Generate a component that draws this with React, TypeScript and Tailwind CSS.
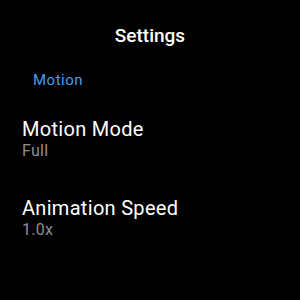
import React from 'react';

const SettingRow: React.FC<{ label: string; value: string }> = ({ label, value }) => (
    <div className="flex flex-col">
        <span className="text-[20px] leading-[24px] tracking-[0.3px] text-white">{label}</span>
        <span className="text-[16px] leading-[20px] tracking-[0.3px] text-[#8f8f8f]">{value}</span>
    </div>
);

export default function App() {
    return (
        <div
            className="w-[300px] h-[300px] bg-black flex flex-col overflow-hidden"
            style={{ fontFamily: 'Roboto, "Noto Sans", sans-serif' }}
        >
            <h1 className="mt-[24px] text-center text-[19px] leading-[24px] font-medium text-white">Settings</h1>
            <div className="mt-[22px] pl-[33px] text-[15px] leading-[20px] text-[#4a9bf0] tracking-[0.5px]">Motion</div>
            <div className="mt-[27px] pl-[22px] flex flex-col gap-[35px]">
                <SettingRow label="Motion Mode" value="Full" />
                <SettingRow label="Animation Speed" value="1.0x" />
            </div>
        </div>
    );
}
